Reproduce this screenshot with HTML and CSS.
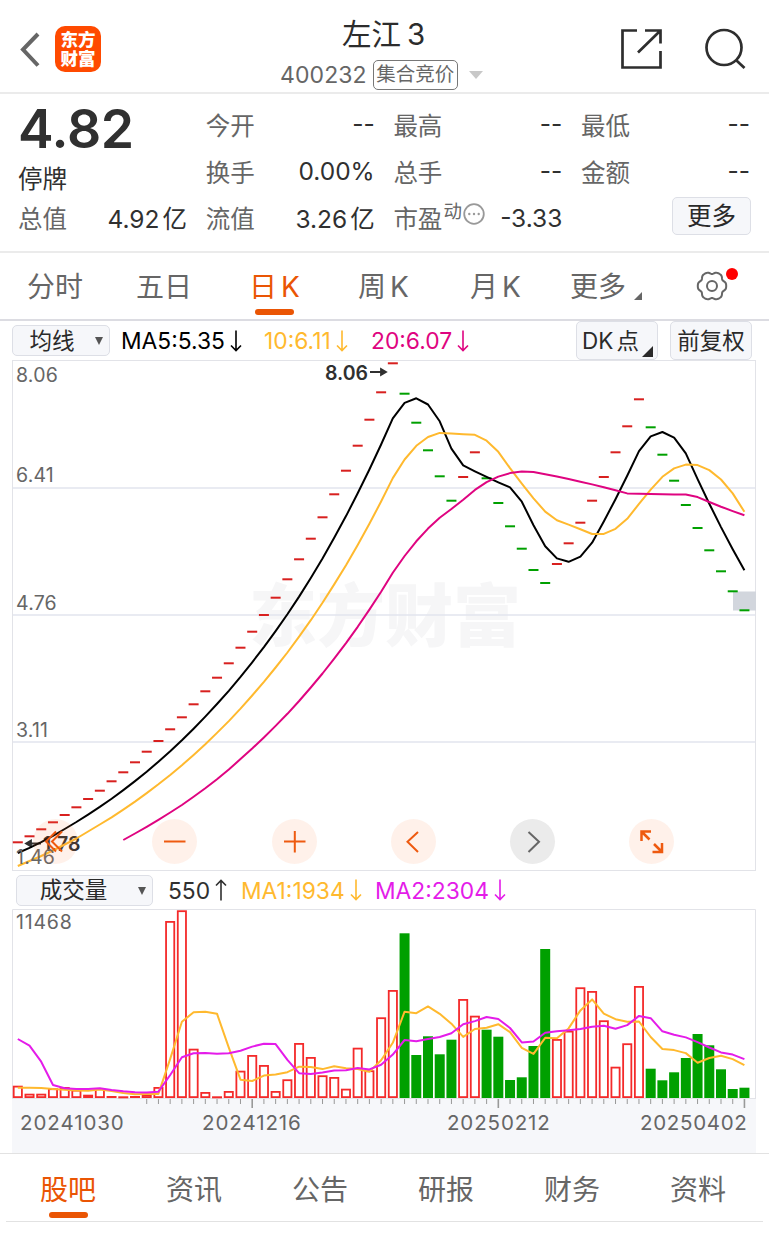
FILE: index.html
```html
<!DOCTYPE html>
<html lang="zh-CN">
<head>
  <meta charset="UTF-8">
  <title>左江3 400232</title>
  <link rel="stylesheet" href="styles.css">
</head>
<body>
  <header class="header">
    <div class="header-left">
      <svg class="back" width="20" height="36" viewBox="0 0 20 36"><path d="M18 2 L3 17.500 L18 33.500" /></svg>
      <div class="logo"><span>东方</span><span>财富</span></div>
    </div>
    <div class="header-title">
      <h1>左江<span>3</span></h1>
      <div class="code-row">
        <span class="code">400232</span>
        <span class="tag">集合竞价</span>
        <i class="caret"></i>
      </div>
    </div>
    <div class="header-right">
      <svg width="42" height="42" viewBox="0 0 42 42"><path d="M17 2.500 H2.500 V39.500 H40.500 V23 M25 2.500 H40.500 V15.500 M40 3 L18 24.500" /></svg>
      <svg width="42" height="42" viewBox="0 0 42 42"><circle cx="20" cy="19.500" r="17.500" /><path d="M32.500 32.500 L40.500 40" /></svg>
    </div>
  </header>

  <section class="quote">
    <div class="price-box">
      <div class="price">4.82</div>
      <div class="status">停牌</div>
    </div>
    <div class="item"><label>今开</label><b>--</b></div>
    <div class="item"><label>最高</label><b>--</b></div>
    <div class="item"><label>最低</label><b>--</b></div>
    <div class="item"><label>换手</label><b>0.00%</b></div>
    <div class="item"><label>总手</label><b>--</b></div>
    <div class="item"><label>金额</label><b>--</b></div>
    <div class="item"><label>总值</label><b>4.92<em>亿</em></b></div>
    <div class="item"><label>流值</label><b>3.26<em>亿</em></b></div>
    <div class="item">
      <label>市盈<sup>动</sup><svg class="dots" width="22" height="22" viewBox="0 0 22 22"><circle class="ring" cx="11" cy="11" r="9.800" /><circle cx="6.300" cy="11" r="1.200" /><circle cx="11" cy="11" r="1.200" /><circle cx="15.700" cy="11" r="1.200" /></svg></label>
      <b>-3.33</b>
    </div>
    <div class="item item-more"><button class="btn more">更多</button></div>
  </section>

  <nav class="periods">
    <a>分时</a>
    <a>五日</a>
    <a class="active">日<span>K</span></a>
    <a>周<span>K</span></a>
    <a>月<span>K</span></a>
    <a class="with-corner">更多<i class="corner"></i></a>
    <a class="settings">
      <svg width="34" height="32" viewBox="-17 -16 34 32"><path id="gear" /><circle r="5" /></svg>
      <i class="dot"></i>
    </a>
  </nav>

  <div class="legend legend-price">
    <button class="btn select">均线<i class="arrow"></i></button>
    <span class="ma black">MA5:5.35<svg class="dir" viewBox="0 0 12 22"><path d="M6 0.500 V20 M1 15.500 L6 20.500 L11 15.500" /></svg></span>
    <span class="ma yellow">10:6.11<svg class="dir" viewBox="0 0 12 22"><path d="M6 0.500 V20 M1 15.500 L6 20.500 L11 15.500" /></svg></span>
    <span class="ma pink">20:6.07<svg class="dir" viewBox="0 0 12 22"><path d="M6 0.500 V20 M1 15.500 L6 20.500 L11 15.500" /></svg></span>
    <div class="legend-right">
      <button class="btn dk">DK<span>点</span><i class="corner"></i></button>
      <button class="btn fq">前复权</button>
    </div>
  </div>

  <div class="chart-wrap">
    <svg id="priceChart" class="chart" width="745" height="511" viewBox="12 360 745 511"></svg>
    <div class="tools">
      <button><svg viewBox="0 0 45 45"><path d="M23 12.500 L13 22.500 L23 32.500 M29 12.500 L19 22.500 L29 32.500" /></svg></button>
      <button><svg viewBox="0 0 45 45"><path d="M12 22.500 H33.500" /></svg></button>
      <button><svg viewBox="0 0 45 45"><path d="M12 22.500 H33.500 M22.800 12 V33.500" /></svg></button>
      <button><svg viewBox="0 0 45 45"><path d="M27 13 L16.500 22.800 L27 33" /></svg></button>
      <button class="off"><svg viewBox="0 0 45 45"><path d="M18.500 13 L29 22.800 L18.500 33" /></svg></button>
      <button><svg class="expand" viewBox="0 0 45 45"><path d="M12.500 22 V12.500 H22 M12.500 12.500 L20.500 20.500 M33 24 V33 H23.500 M33 33 L25 25" /></svg></button>
    </div>
  </div>

  <div class="legend legend-volume">
    <button class="btn select wide">成交量<i class="arrow"></i></button>
    <span class="ma dark">550<svg class="dir" viewBox="0 0 12 22"><path d="M6 21.500 V2 M1 6.500 L6 1.500 L11 6.500" /></svg></span>
    <span class="ma yellow">MA1:1934<svg class="dir" viewBox="0 0 12 22"><path d="M6 0.500 V20 M1 15.500 L6 20.500 L11 15.500" /></svg></span>
    <span class="ma purple">MA2:2304<svg class="dir" viewBox="0 0 12 22"><path d="M6 0.500 V20 M1 15.500 L6 20.500 L11 15.500" /></svg></span>
  </div>

  <svg id="volumeChart" class="chart" width="745" height="244" viewBox="12 909 745 244"></svg>

  <nav class="bottom-tabs">
    <a class="active">股吧</a>
    <a>资讯</a>
    <a>公告</a>
    <a>研报</a>
    <a>财务</a>
    <a>资料</a>
  </nav>
  <div class="bottom-line"></div>

  <script src="script.js"></script>
</body>
</html>
```
FILE: styles.css
```css
* {
  box-sizing: border-box;
}

body {
  margin: 0;
  width: 769px;
  height: 1241px;
  overflow: hidden;
  background: #fff;
  color: #303030;
  font-family: Inter, "Noto Sans CJK SC", sans-serif;
}

button {
  font-family: inherit;
  padding: 0;
  margin: 0;
}

/* header */
.header {
  height: 94px;
  border-bottom: 2px solid #ebebeb;
  display: grid;
  grid-template-columns: 240px 1fr 240px;
}

.header-left {
  display: flex;
  align-items: center;
  padding: 6px 0 0 20px;
}

.back {
  fill: none;
  stroke: #666;
  stroke-width: 4;
  margin-top: 2px;
}

.logo {
  width: 46px;
  height: 46px;
  margin-left: 15px;
  border-radius: 10px;
  background: #ff4a00;
  color: #fff;
  font-size: 17.5px;
  font-weight: 900;
  line-height: 19px;
  display: flex;
  flex-direction: column;
  align-items: center;
  justify-content: center;
}

.header-title {
  padding-top: 13px;
}

h1 {
  margin: 0 2px 0 0;
  font-size: 29.5px;
  font-weight: 400;
  line-height: 42px;
  text-align: center;
  color: #2c2c2c;
}

h1 span {
  margin-left: 6px;
}

.code-row {
  display: flex;
  align-items: center;
  padding: 5px 0 0 40px;
  color: #666;
}

.code {
  font-size: 23px;
  letter-spacing: 0.1px;
}

.tag {
  margin-left: 6px;
  width: 85px;
  height: 30px;
  border: 1.5px solid #777;
  border-radius: 5px;
  font-size: 19.5px;
  line-height: 26px;
  text-align: center;
}

.caret {
  margin-left: 11px;
  border: 7px solid transparent;
  border-top: 8px solid #c8c8c8;
  border-bottom: 0;
}

.header-right {
  display: flex;
  align-items: center;
  justify-content: flex-end;
  gap: 42px;
  padding: 6px 23px 0 0;
}

.header-right svg {
  fill: none;
  stroke: #2e2e2e;
  stroke-width: 2.7;
}

/* quote block */
.quote {
  height: 159px;
  padding: 7px 18px 0 18px;
  border-bottom: 2px solid #ebebeb;
  display: grid;
  grid-template-columns: repeat(4, 169px);
  grid-template-rows: repeat(3, 46.700px);
  column-gap: 18.700px;
}

.price-box {
  grid-row: span 2;
}

.price {
  font-size: 53.5px;
  font-weight: 600;
  line-height: 54px;
  letter-spacing: -0.3px;
  margin-top: 1px;
}

.status {
  font-size: 24.5px;
  line-height: 34px;
  margin-top: 6px;
}

.item {
  display: flex;
  align-items: center;
  justify-content: space-between;
  white-space: nowrap;
}

.item label {
  display: flex;
  align-items: center;
  font-size: 24.500px;
  color: #666;
}

.item b {
  font-size: 24.500px;
  font-weight: 400;
}

.item em {
  font-style: normal;
  margin-left: 3px;
}

.item sup {
  font-size: 18.500px;
  line-height: 18px;
  margin: -13px 1px 0 1px;
}

.dots {
  margin-top: -8px;
  fill: #999;
}

.dots .ring {
  fill: none;
  stroke: #999;
  stroke-width: 1.8;
}

.btn {
  position: relative;
  border: 1.5px solid #dddfe6;
  border-radius: 5px;
  background: #f6f7fa;
  color: #2a2a2a;
}

.item-more {
  justify-content: flex-end;
}

.more {
  width: 79px;
  height: 38px;
  margin: -3px -1px 0 0;
  font-size: 24.500px;
  line-height: 32px;
}

/* period tabs */
.periods {
  height: 68px;
  border-bottom: 2px solid #dcdce2;
  display: flex;
  padding-left: 27px;
  color: #666;
}

.periods a {
  position: relative;
  flex: none;
  width: 109px;
  font-size: 28px;
  line-height: 69px;
  white-space: nowrap;
}

.periods a:nth-child(2) {
  width: 113px;
}

.periods a:nth-child(4) {
  width: 112px;
}

.periods a:nth-child(5) {
  width: 100px;
}

.periods a:nth-child(6) {
  width: 125px;
}

.periods span {
  margin-left: 4px;
}

.periods .active {
  color: #ea5504;
}

.active::after {
  content: "";
  position: absolute;
  left: 8px;
  bottom: 4px;
  width: 39px;
  height: 6px;
  border-radius: 3px;
  background: #ea5504;
}

.periods .active::after {
  left: 6px;
}

.corner {
  display: inline-block;
  border-left: 8px solid transparent;
  border-bottom: 8px solid #666;
  margin: 0 0 -3px 8px;
}

.settings svg {
  display: block;
  margin-top: 17px;
  fill: none;
  stroke: #666;
  stroke-width: 2;
}

.dot {
  position: absolute;
  left: 31px;
  top: 15px;
  width: 12px;
  height: 12px;
  border-radius: 50%;
  background: #f00;
}

/* legends */
.legend {
  height: 39px;
  display: flex;
  align-items: center;
  padding: 0 17px 0 12px;
}

.legend-volume {
  height: 38px;
}

.select {
  width: 98px;
  height: 31px;
  padding-right: 18px;
  font-size: 22.500px;
  line-height: 28px;
}

.select.wide {
  width: 137px;
  margin-left: 4px;
  padding-right: 22px;
}

.arrow {
  position: absolute;
  right: 6px;
  top: 11px;
  border: 4.500px solid transparent;
  border-top: 8px solid #555;
  border-bottom: 0;
}

.ma {
  display: flex;
  align-items: center;
  font-size: 22.8px;
  white-space: nowrap;
}

.dir {
  width: 12px;
  height: 22px;
  margin-left: 5px;
  fill: none;
  stroke: currentColor;
  stroke-width: 1.6;
}

.legend-price .black {
  width: 143px;
  margin-left: 11px;
}

.legend-price .yellow {
  width: 107px;
}

.black {
  color: #000;
}

.dark {
  color: #303030;
  width: 73px;
  margin-left: 15px;
}

.yellow {
  color: #ffb92e;
}

.legend-volume .yellow {
  width: 134px;
}

.pink {
  color: #df0480;
}

.purple {
  color: #e41ce9;
}

.legend-right {
  margin-left: auto;
  display: flex;
  gap: 12px;
}

.legend-right .btn {
  width: 82px;
  height: 39px;
  font-size: 22.500px;
  line-height: 35px;
}

.legend-right .dk {
  padding-right: 13px;
}

.dk span {
  margin-left: 3px;
}

.dk .corner {
  position: absolute;
  right: 4px;
  bottom: 5px;
  border-left-width: 11px;
  border-bottom: 11px solid #2a2a2a;
}

/* charts */
.chart {
  display: block;
  margin-left: 12px;
}

.chart-wrap {
  position: relative;
}

.chart text {
  font-size: 19.500px;
  letter-spacing: 0.2px;
  fill: #666;
}

.chart .mark {
  font-weight: 600;
  letter-spacing: 0;
  fill: #303030;
}

.chart .date {
  font-size: 20.500px;
}

.chart .watermark {
  font-size: 68px;
  font-weight: 900;
  letter-spacing: 0;
  fill: #f6f6f7;
}

.tools {
  position: absolute;
  left: 33px;
  bottom: 7px;
  display: flex;
  gap: 74.300px;
}

.tools button {
  width: 45px;
  height: 45px;
  border: 0;
  border-radius: 50%;
  background: rgba(255, 125, 65, 0.11);
}

.tools svg {
  display: block;
  fill: none;
  stroke: #ee5a10;
  stroke-width: 2;
}

.tools .expand {
  stroke-width: 2.5;
}

.tools .off {
  background: #ebebeb;
}

.tools .off svg {
  stroke: #666;
}

/* bottom tabs */
.bottom-tabs {
  height: 68px;
  border-top: 1px solid #e2e2e2;
  display: flex;
  padding-left: 40px;
  color: #666;
}

.bottom-tabs a {
  position: relative;
  flex: none;
  width: 126px;
  font-size: 28px;
  line-height: 72px;
}

.bottom-tabs .active {
  color: #ea5504;
}

.bottom-tabs .active::after {
  left: 9px;
  bottom: 3px;
}

.bottom-line {
  height: 1px;
  margin: 0 6px;
  background: #e2e2e2;
}
```
FILE: script.js
```js
const STEP = 11.72;
const FIRST_X = 17.8;
const BASE = 1098;
const px = i => FIRST_X + i * STEP;

// daily close levels, top of chart is 360
const closes = [
  842.3, 836.3, 829.3, 822.3, 815, 807.3, 799, 790.7, 781.3, 772.3, 762.3, 751.7, 741,
  729.3, 717.3, 704.3, 691.3, 677.7, 663.3, 647.7, 631.7, 615, 597.7, 579.3, 559.3, 538.7,
  517.3, 494.3, 470.7, 445.7, 419.7, 392.3, 363.3, 393.7, 422.7, 450.3, 476.3, 500.7, 477,
  452.3, 478.3, 503, 526.3, 548.7, 570, 583, 564, 543.3, 522.7, 500.7, 477, 452.3, 426.3,
  399.3, 427.3, 454.7, 480.7, 505, 528, 550.3, 571.3, 591.3, 610.3
];

const volumes = [
  12.3, 4.3, 4.3, 9.7, 11, 8.3, 3.3, 10, 2, 1.7, 2, 3.7, 11, 177, 187.7, 49.3, 6, 1.7, 7,
  27.3, 43, 33, 7, 18.7, 55, 41, 22.7, 21, 9.3, 50.3, 27.7, 80.7, 108, 164.7, 43, 61.7,
  43.7, 58.3, 99, 82.3, 68.3, 61.3, 18, 20.7, 52, 149, 59, 67.3, 110.7, 107, 77.7, 31.3,
  54.7, 112, 29.3, 17.7, 25.7, 40, 64, 52.7, 28.7, 9, 10.3
];

const isDown = i => (i >= 33 && i <= 37) || (i >= 40 && i <= 45) || i >= 54;

// lead holds the averages that need days before the first one shown
function average(values, n, lead, start = 0) {
  const points = [];
  for (let i = start; i < values.length; i++) {
    let v = lead[i - start];
    if (v === undefined) {
      v = values.slice(i - n + 1, i + 1).reduce((a, b) => a + b, 0) / n;
    }
    points.push([i, v]);
  }
  return points;
}

function line(points, color, toY) {
  const str = points.map(p => px(p[0]).toFixed(1) + ',' + toY(p[1]).toFixed(1)).join(' ');
  return `<polyline points="${str}" fill="none" stroke="${color}" stroke-width="2" stroke-linejoin="round"/>`;
}

function drawPrice() {
  let s = '<text class="watermark" x="249" y="641">东方财富</text>';
  [488, 615, 742].forEach(y => {
    s += `<path d="M12 ${y}H756" stroke="#e2e5ee" stroke-width="1.6"/>`;
  });
  s += '<rect x="12.500" y="360.500" width="743" height="510" fill="none" stroke="#e2e3e8"/>';
  s += '<rect x="733" y="591.500" width="23" height="19" fill="#d2d6dd"/>';
  closes.forEach((y, i) => {
    s += `<rect x="${px(i) - 5}" y="${y - 1}" width="10" height="2" fill="${isDown(i) ? '#00a000' : '#d8201f'}"/>`;
  });
  const same = v => v;
  s += '<text class="mark" x="43" y="850.500">1.78</text>';
  s += '<path d="M27 843.500H41M31 840.500L26 843.500L31 846.500Z" stroke="#303030" stroke-width="1.8" fill="#303030"/>';
  s += line(average(closes, 5, [853, 847.8, 842.1, 835.8]), '#000', same);
  s += line(average(closes, 10, [866, 861, 856, 850.5, 844.5, 838.5, 831.5, 824.5, 817.3]), '#ffb92e', same);
  s += line(average(closes, 20, [840, 833.5, 826.8, 819.8, 812.5, 805, 796.8, 788.3, 779.2, 769.5], 9), '#df0480', same);
  s += '<text class="mark" x="325" y="379.500">8.06</text>';
  s += '<path d="M370 372H384M381 369L386 372L381 375Z" stroke="#303030" stroke-width="1.8" fill="#303030"/>';
  [['8.06', 382], ['6.41', 482], ['4.76', 609.5], ['3.11', 736.5], ['1.46', 864]].forEach(l => {
    s += `<text x="16" y="${l[1]}">${l[0]}</text>`;
  });
  document.getElementById('priceChart').innerHTML = s;
}

function drawVolume() {
  let s = `<rect x="12" y="${BASE}" width="744" height="56" fill="#f6f7fa"/>`;
  s += `<path d="M12.500 ${BASE}V909.500H755.500V${BASE}M12 ${BASE + 0.5}H756" fill="none" stroke="#e2e3e8"/>`;
  volumes.forEach((h, i) => {
    const x = px(i);
    if (isDown(i)) {
      s += `<rect x="${x - 5}" y="${BASE - h}" width="10" height="${h}" fill="#00a000"/>`;
    } else {
      s += `<rect x="${x - 4.1}" y="${BASE - h + 0.9}" width="8.200" height="${Math.max(h - 1.8, 0.2)}" fill="#fff" stroke="#f42a2a" stroke-width="1.8"/>`;
    }
    if (i > 10) {
      const long = i === 20 || i === 41 || i === 62;
      s += `<path d="M${x} ${BASE + 1}v${long ? 9 : 5}" stroke="#999" stroke-width="${long ? 1.6 : 1}"/>`;
    }
  });
  const toY = v => BASE - v;
  s += line(average(volumes, 5, [10.3, 10.3, 10, 9]), '#ffb92e', toY);
  s += line(average(volumes, 10, [59, 52.3, 36.3, 13, 9.7, 9, 9, 9.7, 8]), '#e41ce9', toY);
  s += '<text x="16" y="928.500" textLength="56">11468</text>';
  [['20241030', 20, 104], ['20241216', 202, 99], ['20250212', 447, 103], ['20250402', 640, 107]].forEach(d => {
    s += `<text class="date" x="${d[1]}" y="1129.500" textLength="${d[2]}">${d[0]}</text>`;
  });
  document.getElementById('volumeChart').innerHTML = s;
}

// wavy outline of the settings icon
function drawGear() {
  const pts = [];
  for (let a = 0; a < 360; a += 4) {
    const t = a * Math.PI / 180;
    const r = 13.4 + 1.1 * Math.cos(6 * t) - 0.3 * Math.cos(12 * t);
    pts.push((r * Math.cos(t)).toFixed(2) + ' ' + (r * Math.sin(t)).toFixed(2));
  }
  document.getElementById('gear').setAttribute('d', 'M' + pts.join('L') + 'Z');
}

drawPrice();
drawVolume();
drawGear();
```
